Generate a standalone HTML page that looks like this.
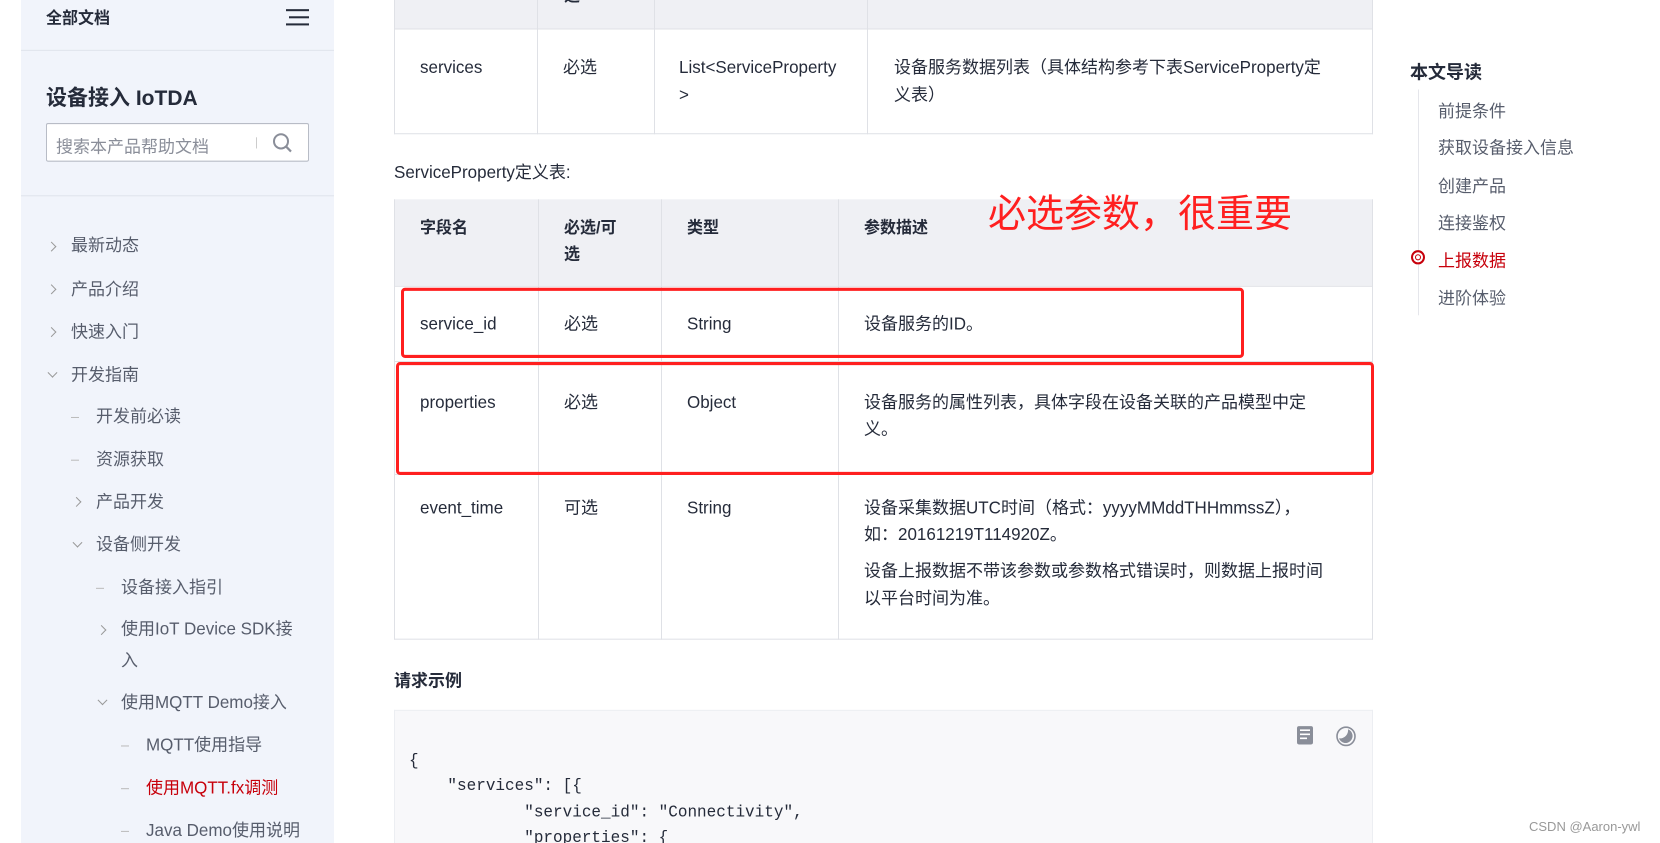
<!DOCTYPE html>
<html style="overflow:hidden;width:1660px;height:843px"><head><meta charset="utf-8"><style>
*{margin:0;padding:0;box-sizing:border-box}
body{width:1660px;height:843px;overflow:hidden;background:#fff;font-family:"Liberation Sans","Noto Sans CJK SC",sans-serif;color:#252b3a;position:relative}
#clip{position:absolute;left:0;top:0;width:1660px;height:843px;overflow:hidden}
#wrap{position:absolute;left:0;top:0;width:1660px;height:843px;transform:scale(1,1.017);transform-origin:0 0}
.a{position:absolute;white-space:nowrap}
#side{position:absolute;left:21px;top:0;width:313px;height:843px;background:#f1f4fb}
.hr{position:absolute;left:0;width:313px;height:1px;background:#dfe3ec}
.nav{font-size:17px;color:#575d6c;line-height:20px}
.chev{position:absolute;width:7px;height:7px;border-right:1px solid #999;border-bottom:1px solid #999}
.dash{position:absolute;width:8px;height:1px;background:#bbb}
.t{font-size:17px;line-height:26px;color:#252b3a}
.th{font-size:16px;line-height:26px;font-weight:bold;color:#252b3a}
.vl{position:absolute;width:1px;background:#dfe1e6}
.hl{position:absolute;height:1px;background:#dfe1e6}
.red{position:absolute;border:3px solid #ff1f1f;border-radius:4px}
.code{font-family:"Liberation Mono",monospace;font-size:16px;color:#252b3a;white-space:pre}
.toc{font-size:17px;color:#575d6c}
</style></head><body><div id="clip"><div id="wrap">
<div id="side">
  <div class="a" style="left:25px;top:4px;font-size:16px;font-weight:bold;color:#252b3a">全部文档</div>
  <div class="a" style="left:265px;top:9px;width:23px;height:2px;background:#252b3a"></div>
  <div class="a" style="left:268px;top:16px;width:20px;height:2px;background:#252b3a"></div>
  <div class="a" style="left:265px;top:23px;width:23px;height:2px;background:#252b3a"></div>
  <div class="hr" style="top:49px"></div>
  <div class="a" style="left:25px;top:80px;font-size:21px;font-weight:bold;color:#252b3a">设备接入 IoTDA</div>
  <div class="a" style="left:25px;top:121px;width:263px;height:38px;border:1px solid #b8bcc6;border-radius:2px;background:#fff"></div>
  <div class="a" style="left:35px;top:130px;font-size:17px;color:#8a8e99">搜索本产品帮助文档</div>
  <div class="a" style="left:235px;top:135px;width:1px;height:11px;background:#ccc"></div>
  <svg class="a" style="left:251px;top:130px" width="22" height="22" viewBox="0 0 22 22"><circle cx="9" cy="9" r="7" fill="none" stroke="#8a8e99" stroke-width="2"/><path d="M14 14l5 5" stroke="#8a8e99" stroke-width="2.2"/></svg>
  <div class="hr" style="top:192px"></div>
</div>
<div class="chev" style="left:48px;top:239px;transform:rotate(-45deg)"></div><div class="a nav" style="left:71px;top:232px">最新动态</div>
<div class="chev" style="left:48px;top:281px;transform:rotate(-45deg)"></div><div class="a nav" style="left:71px;top:275px">产品介绍</div>
<div class="chev" style="left:48px;top:323px;transform:rotate(-45deg)"></div><div class="a nav" style="left:71px;top:317px">快速入门</div>
<div class="chev" style="left:49px;top:363px;transform:rotate(45deg)"></div><div class="a nav" style="left:71px;top:359px">开发指南</div>
<div class="dash" style="left:71px;top:410px"></div><div class="a nav" style="left:96px;top:400px">开发前必读</div>
<div class="dash" style="left:71px;top:452px"></div><div class="a nav" style="left:96px;top:442px">资源获取</div>
<div class="chev" style="left:73px;top:490px;transform:rotate(-45deg)"></div><div class="a nav" style="left:96px;top:484px">产品开发</div>
<div class="chev" style="left:74px;top:530px;transform:rotate(45deg)"></div><div class="a nav" style="left:96px;top:526px">设备侧开发</div>
<div class="dash" style="left:96px;top:578px"></div><div class="a nav" style="left:121px;top:568px">设备接入指引</div>
<div class="chev" style="left:98px;top:616px;transform:rotate(-45deg)"></div><div class="a nav" style="left:121px;top:609px">使用IoT Device SDK接</div><div class="a nav" style="left:121px;top:640px">入</div>
<div class="chev" style="left:99px;top:685px;transform:rotate(45deg)"></div><div class="a nav" style="left:121px;top:681px">使用MQTT Demo接入</div>
<div class="dash" style="left:121px;top:733px"></div><div class="a nav" style="left:146px;top:723px">MQTT使用指导</div>
<div class="dash" style="left:121px;top:775px"></div><div class="a nav" style="left:146px;top:765px;color:#c7000b">使用MQTT.fx调测</div>
<div class="dash" style="left:121px;top:817px"></div><div class="a nav" style="left:146px;top:807px">Java Demo使用说明</div>

<div class="a" style="left:394px;top:0;width:979px;height:28px;background:#eff0f4"></div>
<div class="a th" style="left:564px;top:-16px">选</div>
<div class="hl" style="left:394px;top:28px;width:979px"></div>
<div class="hl" style="left:394px;top:131px;width:979px"></div>
<div class="vl" style="left:394px;top:0;height:132px"></div>
<div class="vl" style="left:537px;top:0;height:132px"></div>
<div class="vl" style="left:654px;top:0;height:132px"></div>
<div class="vl" style="left:867px;top:0;height:132px"></div>
<div class="vl" style="left:1372px;top:0;height:132px"></div>
<div class="a t" style="left:420px;top:54px">services</div>
<div class="a t" style="left:563px;top:54px">必选</div>
<div class="a t" style="left:679px;top:54px">List&lt;ServiceProperty</div>
<div class="a t" style="left:679px;top:81px">&gt;</div>
<div class="a t" style="left:894px;top:54px">设备服务数据列表（具体结构参考下表ServiceProperty定</div>
<div class="a t" style="left:894px;top:81px">义表）</div>

<div class="a t" style="left:394px;top:157px">ServiceProperty定义表:</div>

<div class="a" style="left:394px;top:196px;width:979px;height:85px;background:#eff0f4"></div>
<div class="hl" style="left:394px;top:281px;width:979px"></div>
<div class="hl" style="left:394px;top:355px;width:979px"></div>
<div class="hl" style="left:394px;top:466px;width:979px"></div>
<div class="hl" style="left:394px;top:628px;width:979px"></div>
<div class="vl" style="left:394px;top:196px;height:433px"></div>
<div class="vl" style="left:538px;top:196px;height:433px"></div>
<div class="vl" style="left:661px;top:196px;height:433px"></div>
<div class="vl" style="left:838px;top:196px;height:433px"></div>
<div class="vl" style="left:1372px;top:196px;height:433px"></div>
<div class="a th" style="left:420px;top:212px">字段名</div>
<div class="a th" style="left:564px;top:212px">必选/可</div>
<div class="a th" style="left:564px;top:238px">选</div>
<div class="a th" style="left:687px;top:212px">类型</div>
<div class="a th" style="left:864px;top:212px">参数描述</div>
<div class="a" style="left:988px;top:189px;font-size:38px;color:#ff1f1f;line-height:44px">必选参数，很重要</div>

<div class="a t" style="left:420px;top:306px">service_id</div>
<div class="a t" style="left:564px;top:306px">必选</div>
<div class="a t" style="left:687px;top:306px">String</div>
<div class="a t" style="left:864px;top:306px">设备服务的ID。</div>

<div class="a t" style="left:420px;top:383px">properties</div>
<div class="a t" style="left:564px;top:383px">必选</div>
<div class="a t" style="left:687px;top:383px">Object</div>
<div class="a t" style="left:864px;top:383px">设备服务的属性列表，具体字段在设备关联的产品模型中定</div>
<div class="a t" style="left:864px;top:409px">义。</div>

<div class="a t" style="left:420px;top:487px">event_time</div>
<div class="a t" style="left:564px;top:487px">可选</div>
<div class="a t" style="left:687px;top:487px">String</div>
<div class="a t" style="left:864px;top:487px">设备采集数据UTC时间（格式：yyyyMMddTHHmmssZ），</div>
<div class="a t" style="left:864px;top:513px">如：20161219T114920Z。</div>
<div class="a t" style="left:864px;top:549px">设备上报数据不带该参数或参数格式错误时，则数据上报时间</div>
<div class="a t" style="left:864px;top:576px">以平台时间为准。</div>

<div class="red" style="left:401px;top:283px;width:843px;height:69px"></div>
<div class="red" style="left:396px;top:356px;width:978px;height:111px"></div>

<div class="a" style="left:394px;top:655px;font-size:17px;font-weight:bold">请求示例</div>
<div class="a" style="left:394px;top:698px;width:979px;height:145px;background:#f8f8fa;border:1px solid #eceef2;border-bottom:none"></div>
<svg class="a" style="left:1296px;top:713px" width="18" height="20" viewBox="0 0 18 20"><rect x="1" y="1" width="16" height="18" rx="2" fill="#8a8e99"/><path d="M4 5h10M4 9h10M4 13h7" stroke="#fff" stroke-width="1.6"/></svg>
<svg class="a" style="left:1335px;top:713px" width="22" height="22" viewBox="0 0 22 22"><circle cx="11" cy="11" r="9" fill="none" stroke="#8a8e99" stroke-width="1.6"/><path d="M13 4a7 7 0 1 1-9 9a8 8 0 0 0 9-9z" fill="#8a8e99"/></svg>
<div class="a code" style="left:409px;top:739px">{</div>
<div class="a code" style="left:409px;top:764px">    "services": [{</div>
<div class="a code" style="left:409px;top:790px">            "service_id": "Connectivity",</div>
<div class="a code" style="left:409px;top:815px;height:28px;overflow:hidden">            "properties": {</div>

<div class="a" style="left:1410px;top:57px;font-size:18px;font-weight:bold;color:#252b3a">本文导读</div>
<div class="a" style="left:1418px;top:88px;width:1px;height:222px;background:#e5e6eb"></div>
<div class="a toc" style="left:1438px;top:95px">前提条件</div>
<div class="a toc" style="left:1438px;top:131px">获取设备接入信息</div>
<div class="a toc" style="left:1438px;top:169px">创建产品</div>
<div class="a toc" style="left:1438px;top:205px">连接鉴权</div>
<div class="a" style="left:1411px;top:246px;width:14px;height:14px;border:2px solid #c7000b;border-radius:50%;background:#fff"></div>
<div class="a" style="left:1415px;top:250px;width:6px;height:6px;border:1.5px solid #c7000b;border-radius:50%"></div>
<div class="a toc" style="left:1438px;top:242px;color:#c7000b">上报数据</div>
<div class="a toc" style="left:1438px;top:279px">进阶体验</div>

<div class="a" style="left:1529px;top:805px;font-size:13px;color:#999">CSDN @Aaron-ywl</div>
</div></div></body></html>
